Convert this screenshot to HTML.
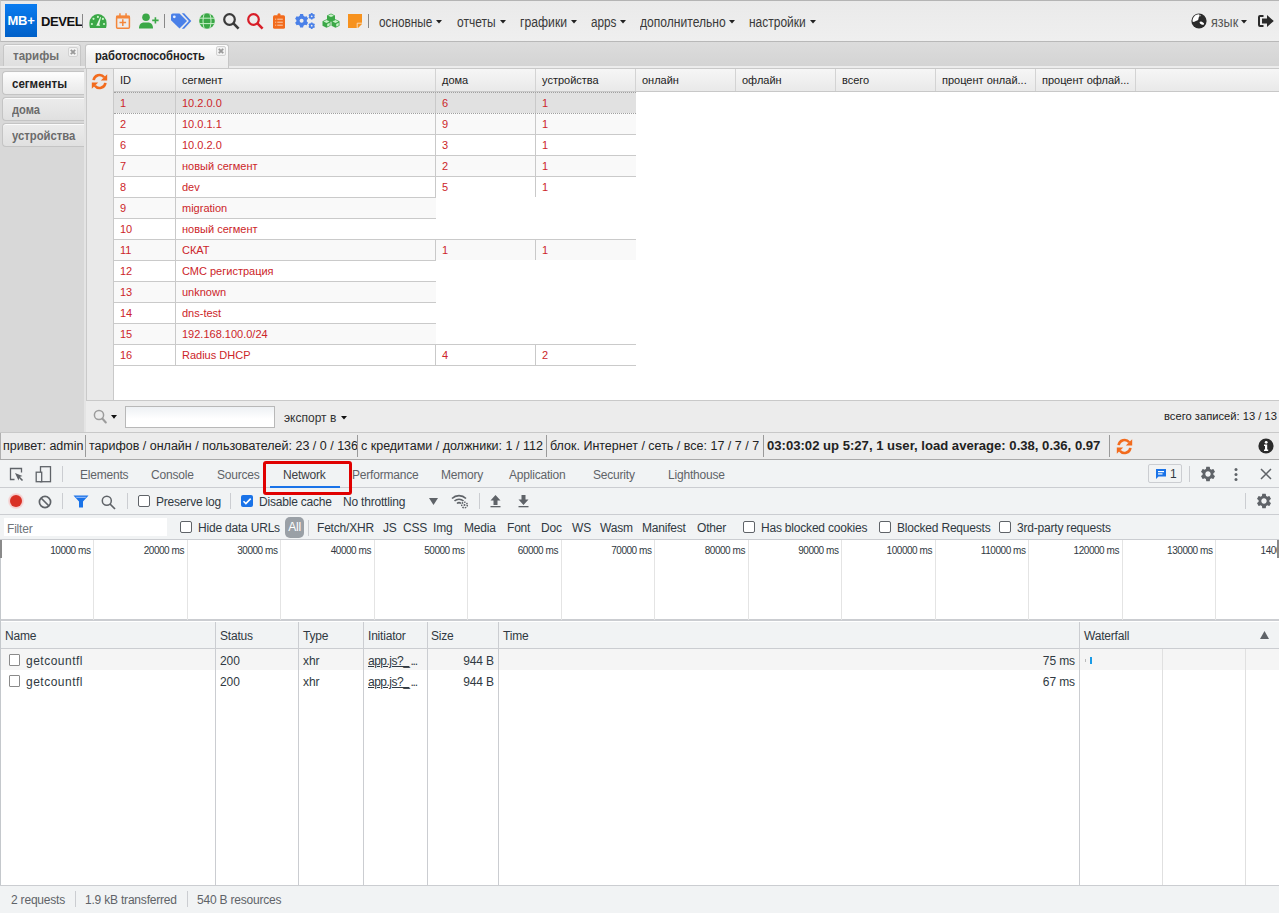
<!DOCTYPE html>
<html><head><meta charset="utf-8">
<style>
*{box-sizing:border-box;margin:0;padding:0}
html,body{width:1279px;height:913px;overflow:hidden;background:#fff;font-family:"Liberation Sans",sans-serif}
.a{position:absolute}
/* top toolbar */
#top{left:0;top:0;width:1279px;height:42px;background:linear-gradient(#eaeaea,#efefef);border-top:1px solid #b4b4b4;border-left:1px solid #c8c8c8;border-bottom:1px solid #b8b8b8}
#logo{left:5px;top:4px;width:32px;height:33px;background:linear-gradient(#0a7cf0,#0060c8);color:#fff;font-weight:bold;font-size:13px;line-height:33px;text-align:center;letter-spacing:-0.3px}
.menu{top:14px;font-size:14px;color:#3a3a3a;white-space:nowrap;line-height:16px}
.mt{display:inline-block;transform-origin:0 0}
.caret{display:inline-block;width:0;height:0;border-left:3px solid transparent;border-right:3px solid transparent;border-top:4px solid #333;vertical-align:middle;margin-left:4px;margin-top:-2px}
.sep{width:1px;height:20px;background:#aaa;top:11px}
/* tab bar */
#tabbar{left:0;top:42px;width:1279px;height:24px;background:linear-gradient(#dcdcdc,#d4d4d4)}
.tab{border:1px solid #c6c6c6;border-bottom:none;border-radius:3px 3px 0 0;font-weight:bold;font-size:12px}
.x{width:10px;height:10px;border:1px solid #d2d2d2;border-radius:2px;background:#f2f2f2}
.x svg{position:absolute;left:-1px;top:-1px}
/* sidebar */
#side{left:0;top:69px;width:84px;height:364px;background:#d8d8d8}
.stab{left:2px;width:82px;height:24px;border:1px solid #c4c4c4;border-right:none;border-radius:4px 0 0 4px;font-weight:bold;font-size:12px;padding-left:9px;line-height:25px;color:#6b6b6b;background:linear-gradient(#ececec,#e6e6e6 50%,#e0e0e0);box-shadow:inset 0 1px 0 #fbfbfb}
#refcol{left:86px;top:69px;width:28px;height:332px;background:#e9e9e9;border-left:1px solid #c9c9c9;border-right:1px solid #c9c9c9}
/* grid */
#gh{left:114px;top:69px;width:1165px;height:23px;background:linear-gradient(#f6f6f6,#e9e9e9);border-bottom:1px solid #c8c8c8}
.hc{top:0;height:22px;border-right:1px solid #d3d3d3;font-size:11px;color:#222;padding-left:6px;line-height:22px;white-space:nowrap}
.r{left:114px;width:523px;height:21px;font-size:11px;color:#cc2529;border-top:1px solid #cacaca}
.c{top:0;height:20px;line-height:20px;padding-left:6px;border-right:1px solid #c9c9c9;white-space:nowrap}
/* bottom grid toolbar */
#gbot{left:86px;top:400px;width:1193px;height:33px;background:#ececec;border-top:1px solid #c9c9c9}
/* status bar */
#status{left:0;top:432px;width:1279px;height:28px;background:#ececec;border-top:1px solid #c8c8c8;border-bottom:1px solid #b0b0b0;font-size:12.5px;color:#222;white-space:nowrap}
.sc{top:1px;height:25px;line-height:25px;padding:0 3px}
/* devtools */
.dt{font-family:"Liberation Sans",sans-serif;font-size:12px;color:#303942;letter-spacing:-0.2px}
#dtabs{left:0;top:460px;width:1279px;height:28px;background:#f1f3f4;border-bottom:1px solid #cbcdd1}
#dtool{left:0;top:488px;width:1279px;height:27px;background:#f1f3f4;border-bottom:1px solid #cbcdd1}
#dfilt{left:0;top:515px;width:1279px;height:25px;background:#f1f3f4;border-bottom:1px solid #cbcdd1}
#overview{left:0;top:540px;width:1279px;height:81px;background:#fff;border-bottom:2px solid #cbcdd1}
#nhead{left:0;top:622px;width:1279px;height:27px;background:#f1f3f4;border-bottom:1px solid #cbcdd1}
#foot{left:0;top:885px;width:1279px;height:28px;background:#f1f3f4;border-top:1px solid #cbcdd1}
.dtab{top:1px;height:28px;line-height:28px;color:#5f6368;font-size:12px}
.vl{width:1px;background:#cbcdd1}
.cb{width:12px;height:12px;border:1px solid #5f6368;border-radius:2px;background:#fff}
</style></head><body>

<!-- TOP TOOLBAR -->
<div id="top" class="a"></div>
<div id="logo" class="a">MB+</div>
<div class="a" style="left:41px;top:14px;font-weight:bold;font-size:13px;color:#111;letter-spacing:-0.4px">DEVEL</div>
<div class="a sep" style="left:82px;top:14px;height:14px;background:#888"></div>
<svg class="a" style="left:89px;top:13px" width="18" height="16" viewBox="0 0 18 16"><path d="M1 15C0.5 13.5 0.4 12 0.4 10A8.6 9 0 0 1 17.6 10C17.6 12 17.5 13.5 17 15z" fill="#3ba847"/><g fill="#c8f5c8"><circle cx="4.5" cy="5.8" r="1.1"/><circle cx="8.9" cy="3.9" r="1.1"/><circle cx="13.9" cy="5.9" r="1.1"/><circle cx="2.9" cy="11" r="1.1"/><circle cx="15" cy="11" r="1.1"/></g><path d="M7.2 12.8L8.2 10.8 11.3 4 12 4.3 10.3 11.2 11.2 12.8z" fill="#e6fae6"/></svg>
<svg class="a" style="left:115px;top:13px" width="16" height="16" viewBox="0 0 16 16"><rect x="1.6" y="3.4" width="12.8" height="11.8" rx="1" fill="none" stroke="#f4863a" stroke-width="1.5"/><rect x="1" y="2.6" width="14" height="3" rx="0.8" fill="#f4863a"/><rect x="4.2" y="0.3" width="1.5" height="3" fill="#f4863a"/><rect x="10.3" y="0.3" width="1.5" height="3" fill="#f4863a"/><path d="M7.8 6.3v6.6M4.5 9.6h6.6" stroke="#f4863a" stroke-width="1.5"/></svg>
<svg class="a" style="left:139px;top:13px" width="21" height="16" viewBox="0 0 21 16"><circle cx="7" cy="4.2" r="3.8" fill="#3ba847"/><path d="M0 15.5C0 11.5 2 9.5 5 9.5h4c3 0 5 2 5 6z" fill="#3ba847"/><path d="M16.4 4.2v6.4M13.2 7.4h6.4" stroke="#3ba847" stroke-width="1.6"/></svg>
<div class="a sep" style="left:164px;top:14px;height:14px;background:#888"></div>
<svg class="a" style="left:170px;top:13px" width="22" height="16" viewBox="0 0 22 16"><path d="M1 2.3Q1 0.5 2.8 0.5H9.5L17 8 9.5 15.5 1 7.3z" fill="#4a80e8"/><circle cx="4.3" cy="3.8" r="1.4" fill="#e6eeff"/><path d="M11.8 0.3h2.4L21.3 8 14.2 15.7h-2.4L18.9 8z" fill="#4a80e8"/></svg>
<svg class="a" style="left:199px;top:13px" width="16" height="16" viewBox="0 0 16 16"><circle cx="8" cy="8" r="7.8" fill="#3ba847"/><path d="M0 5.2h16M0 10.6h16" stroke="#c8f0c8" stroke-width="1"/><path d="M5.2 0.5C3.6 5 3.6 11 5.2 15.5M10.8 0.5C12.4 5 12.4 11 10.8 15.5" fill="none" stroke="#c8f0c8" stroke-width="1"/></svg>
<svg class="a" style="left:222px;top:12px" width="18" height="18" viewBox="0 0 18 18"><circle cx="7.5" cy="7.5" r="5.3" fill="none" stroke="#3a3a3a" stroke-width="2.2"/><path d="M11.2 11.2l5.4 5.4" stroke="#3a3a3a" stroke-width="2.6"/></svg>
<svg class="a" style="left:246px;top:12px" width="18" height="18" viewBox="0 0 18 18"><circle cx="7.5" cy="7.5" r="5.3" fill="none" stroke="#d81e28" stroke-width="2.2"/><path d="M11.2 11.2l5.4 5.4" stroke="#d81e28" stroke-width="2.6"/></svg>
<svg class="a" style="left:273px;top:13px" width="12" height="16" viewBox="0 0 12 16"><rect x="0" y="2.2" width="12" height="13.6" rx="1.5" fill="#f26b1d"/><circle cx="6" cy="1.8" r="1.6" fill="#f26b1d"/><path d="M2.2 6.2h1M4.3 6.2h5.5M2.2 9.2h1M4.3 9.2h5.5M2.2 12.2h1M4.3 12.2h5.5" stroke="#fbd3b5" stroke-width="1"/></svg>
<svg class="a" style="left:294px;top:13px" width="22" height="17" viewBox="0 0 22 17"><path fill="#4a80e8" fill-rule="evenodd" d="M5.72 2.79 L6.10 1.12 L9.10 1.12 L9.48 2.79 L10.95 3.65 L12.60 3.14 L14.09 5.73 L12.83 6.90 L12.83 8.60 L14.09 9.77 L12.60 12.36 L10.95 11.85 L9.48 12.71 L9.10 14.38 L6.10 14.38 L5.72 12.71 L4.25 11.85 L2.60 12.36 L1.11 9.77 L2.37 8.60 L2.37 6.90 L1.11 5.73 L2.60 3.14 L4.25 3.65Z M9.6 7.75A2 2 0 1 0 5.6 7.75A2 2 0 1 0 9.6 7.75Z"/><path fill="#4a80e8" fill-rule="evenodd" d="M16.74 0.77 L16.95 -0.02 L18.45 -0.02 L18.66 0.77 L19.41 1.21 L20.20 0.99 L20.95 2.29 L20.36 2.87 L20.36 3.73 L20.95 4.31 L20.20 5.61 L19.41 5.39 L18.66 5.83 L18.45 6.62 L16.95 6.62 L16.74 5.83 L15.99 5.39 L15.20 5.61 L14.45 4.31 L15.04 3.73 L15.04 2.87 L14.45 2.29 L15.20 0.99 L15.99 1.21Z M18.6 3.3A0.9 0.9 0 1 0 16.8 3.3A0.9 0.9 0 1 0 18.6 3.3Z"/><path fill="#4a80e8" fill-rule="evenodd" d="M16.74 10.17 L16.95 9.38 L18.45 9.38 L18.66 10.17 L19.41 10.61 L20.20 10.39 L20.95 11.69 L20.36 12.27 L20.36 13.13 L20.95 13.71 L20.20 15.01 L19.41 14.79 L18.66 15.23 L18.45 16.02 L16.95 16.02 L16.74 15.23 L15.99 14.79 L15.20 15.01 L14.45 13.71 L15.04 13.13 L15.04 12.27 L14.45 11.69 L15.20 10.39 L15.99 10.61Z M18.6 12.7A0.9 0.9 0 1 0 16.8 12.7A0.9 0.9 0 1 0 18.6 12.7Z"/></svg>
<svg class="a" style="left:322px;top:13px" width="18" height="15" viewBox="0 0 18 15"><g fill="#3ba847"><path d="M5 2.5L9 0.5 13 2.5V7L9 9 5 7z"/><path d="M0.5 8.3L4.5 6.3 8.5 8.3V12.8L4.5 14.8 0.5 12.8z"/><path d="M9.5 8.3L13.5 6.3 17.5 8.3V12.8L13.5 14.8 9.5 12.8z"/></g><g fill="#c9f2c9"><path d="M6 2.7L9 1.3 12 2.7 9 4.1z"/><path d="M1.5 8.5L4.5 7.1 7.5 8.5 4.5 9.9z"/><path d="M10.5 8.5L13.5 7.1 16.5 8.5 13.5 9.9z"/><path d="M5.2 11v2.6l2.5-1.2V9.8z"/><path d="M14.2 11v2.6l2.5-1.2V9.8z"/></g></svg>
<svg class="a" style="left:348px;top:14px" width="14" height="14" viewBox="0 0 14 14"><path d="M0 0h14v9.5L9.5 14H0z" fill="#f7921e"/><path d="M10 14V10h4z" fill="#f7921e"/><path d="M9.2 14V9.2H14" fill="none" stroke="#fde3c4" stroke-width="0.9"/></svg>
<div class="a sep" style="left:368px;top:14px;height:14px;background:#888"></div>
<div class="a menu" style="left:379px"><span class="mt" style="transform:scaleX(0.843)">основные</span></div>
<div class="a menu" style="left:457px"><span class="mt" style="transform:scaleX(0.857)">отчеты</span></div>
<div class="a menu" style="left:520px"><span class="mt" style="transform:scaleX(0.872)">графики</span></div>
<div class="a menu" style="left:591px"><span class="mt" style="transform:scaleX(0.84)">apps</span></div>
<div class="a menu" style="left:640px"><span class="mt" style="transform:scaleX(0.863)">дополнительно</span></div>
<div class="a menu" style="left:749px"><span class="mt" style="transform:scaleX(0.856)">настройки</span></div>
<svg class="a" style="left:436px;top:20px" width="6" height="4" viewBox="0 0 6 4"><path d="M0 0h6L3 3.5z" fill="#222"/></svg>
<svg class="a" style="left:500px;top:20px" width="6" height="4" viewBox="0 0 6 4"><path d="M0 0h6L3 3.5z" fill="#222"/></svg>
<svg class="a" style="left:570.5px;top:20px" width="6" height="4" viewBox="0 0 6 4"><path d="M0 0h6L3 3.5z" fill="#222"/></svg>
<svg class="a" style="left:620px;top:20px" width="6" height="4" viewBox="0 0 6 4"><path d="M0 0h6L3 3.5z" fill="#222"/></svg>
<svg class="a" style="left:729px;top:20px" width="6" height="4" viewBox="0 0 6 4"><path d="M0 0h6L3 3.5z" fill="#222"/></svg>
<svg class="a" style="left:810px;top:20px" width="6" height="4" viewBox="0 0 6 4"><path d="M0 0h6L3 3.5z" fill="#222"/></svg>
<svg class="a" style="left:1241px;top:20px" width="6" height="4" viewBox="0 0 6 4"><path d="M0 0h6L3 3.5z" fill="#222"/></svg>
<svg class="a" style="left:1191px;top:13px" width="16" height="16" viewBox="0 0 16 16"><circle cx="8" cy="8" r="7.6" fill="#2b2b2b"/><path d="M1.5 8.5C1.5 4 4.5 1.2 8 1.2 9 2 8.8 3 8 4 7 5 8 6 7 7 6 8.2 5 7.5 4 8.5 3 9 2.2 9 1.5 8.5z" fill="#fff"/><path d="M8.5 9C9.5 8 11 8.5 12 9.5 13 10 13.5 11 12.5 11.8 11.5 12 10 11.5 9 10.5z" fill="#fff"/><path d="M9.5 2C10.5 2.5 10 3.5 9.3 3.2z" fill="#fff"/></svg>
<div class="a menu" style="left:1211px;color:#555"><span class="mt" style="transform:scaleX(0.9)">язык</span></div>
<svg class="a" style="left:1258px;top:15px" width="16" height="12" viewBox="0 0 16 12"><path d="M5.5 1H2Q1 1 1 2V10Q1 11 2 11H5.5" fill="none" stroke="#2b2b2b" stroke-width="2"/><path d="M4 3.6H9V0L15.8 6 9 12V8.4H4z" fill="#2b2b2b"/></svg>
<!-- TAB BAR -->
<div id="tabbar" class="a"></div>
<div class="a" style="left:0;top:66px;width:1279px;height:2px;background:#ececec"></div>
<div class="a" style="left:0;top:68px;width:1279px;height:1px;background:#c9c9c9"></div>
<div class="a tab" style="left:3px;top:44px;width:78px;height:22px;background:linear-gradient(#eaeaea,#e0e0e0);color:#6e6e6e;padding:4px 0 0 9px;box-shadow:inset 0 1px 0 #f8f8f8"><span class="mt" style="transform:scaleX(0.96)">тарифы</span></div>
<div class="a x" style="left:68px;top:47px"><svg width="10" height="10" viewBox="0 0 10 10"><path d="M2.8 2.8l4.4 4.4M7.2 2.8L2.8 7.2" stroke="#9a9a9a" stroke-width="1.9"/></svg></div>
<div class="a tab" style="left:85px;top:44px;width:144px;height:24px;background:linear-gradient(#fefefe,#f0f0f0 60%,#ededed);color:#222;padding:4px 0 0 9px"><span class="mt" style="transform:scaleX(0.93)">работоспособность</span></div>
<div class="a x" style="left:216px;top:46px"><svg width="10" height="10" viewBox="0 0 10 10"><path d="M2.8 2.8l4.4 4.4M7.2 2.8L2.8 7.2" stroke="#9a9a9a" stroke-width="1.9"/></svg></div>

<!-- SIDEBAR -->
<div id="side" class="a"></div>
<div class="a stab" style="top:71px;color:#222;background:linear-gradient(#fefefe,#f2f2f2 50%,#e9e9e9)"><span class="mt" style="transform:scaleX(0.96)">сегменты</span></div>
<div class="a stab" style="top:97px"><span class="mt" style="transform:scaleX(0.93)">дома</span></div>
<div class="a stab" style="top:123px"><span class="mt" style="transform:scaleX(0.94)">устройства</span></div>
<div class="a" style="left:84px;top:69px;width:2px;height:364px;background:#e4e4e4"></div>
<div id="refcol" class="a"></div>
<svg class="a" style="left:91px;top:73px" width="17" height="17" viewBox="0 0 17 17"><g fill="none" stroke="#f26b1d" stroke-width="2.6"><path d="M2.6 7.2A6 6 0 0 1 13.2 4.2"/><path d="M14.4 9.8A6 6 0 0 1 3.8 12.8"/></g><path d="M16.2 1.2V7.6H9.8z" fill="#f26b1d"/><path d="M0.8 15.8V9.4H7.2z" fill="#f26b1d"/></svg>

<!-- GRID HEADER -->
<div id="gh" class="a">
 <div class="a hc" style="left:0;width:62px">ID</div>
 <div class="a hc" style="left:62px;width:260px">сегмент</div>
 <div class="a hc" style="left:322px;width:100px">дома</div>
 <div class="a hc" style="left:422px;width:100px">устройства</div>
 <div class="a hc" style="left:522px;width:100px">онлайн</div>
 <div class="a hc" style="left:622px;width:100px">офлайн</div>
 <div class="a hc" style="left:722px;width:100px">всего</div>
 <div class="a hc" style="left:822px;width:100px">процент онлай...</div>
 <div class="a hc" style="left:922px;width:100px">процент офлай...</div>
</div>

<div id="rows">
<div class="a r" style="top:92px;width:522px;background:#fff;background:#e1e1e1;border-top:1px dotted #a0a0a0"><div class="a c" style="left:0px;width:62px">1</div><div class="a c" style="left:62px;width:260px">10.2.0.0</div><div class="a c" style="left:322px;width:100px">6</div><div class="a c" style="left:422px;width:100px;border-right:none">1</div></div>
<div class="a r" style="top:113px;width:522px;background:#f9f9f9;border-top:1px dotted #a0a0a0"><div class="a c" style="left:0px;width:62px">2</div><div class="a c" style="left:62px;width:260px">10.0.1.1</div><div class="a c" style="left:322px;width:100px">9</div><div class="a c" style="left:422px;width:100px;border-right:none">1</div></div>
<div class="a r" style="top:134px;width:522px;background:#fff"><div class="a c" style="left:0px;width:62px">6</div><div class="a c" style="left:62px;width:260px">10.0.2.0</div><div class="a c" style="left:322px;width:100px">3</div><div class="a c" style="left:422px;width:100px;border-right:none">1</div></div>
<div class="a r" style="top:155px;width:522px;background:#f9f9f9"><div class="a c" style="left:0px;width:62px">7</div><div class="a c" style="left:62px;width:260px">новый сегмент</div><div class="a c" style="left:322px;width:100px">2</div><div class="a c" style="left:422px;width:100px;border-right:none">1</div></div>
<div class="a r" style="top:176px;width:522px;background:#fff"><div class="a c" style="left:0px;width:62px">8</div><div class="a c" style="left:62px;width:260px">dev</div><div class="a c" style="left:322px;width:100px">5</div><div class="a c" style="left:422px;width:100px;border-right:none">1</div></div>
<div class="a r" style="top:197px;width:322px;background:#f9f9f9"><div class="a c" style="left:0px;width:62px">9</div><div class="a c" style="left:62px;width:260px;border-right:none">migration</div></div>
<div class="a r" style="top:218px;width:322px;background:#fff"><div class="a c" style="left:0px;width:62px">10</div><div class="a c" style="left:62px;width:260px;border-right:none">новый сегмент</div></div>
<div class="a r" style="top:239px;width:522px;background:#f9f9f9"><div class="a c" style="left:0px;width:62px">11</div><div class="a c" style="left:62px;width:260px">СКАТ</div><div class="a c" style="left:322px;width:100px">1</div><div class="a c" style="left:422px;width:100px;border-right:none">1</div></div>
<div class="a r" style="top:260px;width:322px;background:#fff"><div class="a c" style="left:0px;width:62px">12</div><div class="a c" style="left:62px;width:260px;border-right:none">СМС регистрация</div></div>
<div class="a r" style="top:281px;width:322px;background:#f9f9f9"><div class="a c" style="left:0px;width:62px">13</div><div class="a c" style="left:62px;width:260px;border-right:none">unknown</div></div>
<div class="a r" style="top:302px;width:322px;background:#fff"><div class="a c" style="left:0px;width:62px">14</div><div class="a c" style="left:62px;width:260px;border-right:none">dns-test</div></div>
<div class="a r" style="top:323px;width:322px;background:#f9f9f9"><div class="a c" style="left:0px;width:62px">15</div><div class="a c" style="left:62px;width:260px;border-right:none">192.168.100.0/24</div></div>
<div class="a r" style="top:344px;width:522px;background:#fff;height:22px;border-bottom:1px solid #cacaca"><div class="a c" style="left:0px;width:62px">16</div><div class="a c" style="left:62px;width:260px">Radius DHCP</div><div class="a c" style="left:322px;width:100px">4</div><div class="a c" style="left:422px;width:100px;border-right:none">2</div></div>
</div>

<!-- GRID BOTTOM -->
<div id="gbot" class="a"></div>
<svg class="a" style="left:93px;top:409px" width="14" height="15" viewBox="0 0 14 15"><circle cx="6" cy="6" r="4.6" fill="none" stroke="#9c9c9c" stroke-width="1.5"/><path d="M9.3 9.5l3.5 4" stroke="#9c9c9c" stroke-width="2" stroke-linecap="round"/></svg>
<svg class="a" style="left:111px;top:415px" width="6" height="4" viewBox="0 0 6 4"><path d="M0 0h6L3 3.8z" fill="#111"/></svg>
<div class="a" style="left:125px;top:406px;width:150px;height:22px;background:linear-gradient(#eef1f4,#fff 60%);border:1px solid #b8b8b8"></div>
<div class="a" style="left:284px;top:411px;font-size:12px;color:#333">экспорт в</div>
<svg class="a" style="left:341px;top:416px" width="6" height="4" viewBox="0 0 6 4"><path d="M0 0h6L3 3.5z" fill="#111"/></svg>
<div class="a" style="left:1164px;top:410px;font-size:11.2px;color:#222">всего записей: 13 / 13</div>

<!-- STATUS BAR -->
<div id="status" class="a">
 <div class="a sc" style="left:0">привет: admin</div>
 <div class="a sc" style="left:86px">тарифов / онлайн / пользователей: 23 / 0 / 136</div>
 <div class="a sc" style="left:358px">с кредитами / должники: 1 / 112</div>
 <div class="a sc" style="left:547px">блок. Интернет / сеть / все: 17 / 7 / 7</div>
 <div class="a sc" style="left:764px;top:0;font-weight:bold;font-size:13.1px">03:03:02 up 5:27, 1 user, load average: 0.38, 0.36, 0.97</div>
 <div class="a" style="left:85px;top:2px;width:1px;height:22px;background:#9a9a9a"></div>
 <div class="a" style="left:357px;top:2px;width:1px;height:22px;background:#9a9a9a"></div>
 <div class="a" style="left:546px;top:2px;width:1px;height:22px;background:#9a9a9a"></div>
 <div class="a" style="left:763px;top:2px;width:1px;height:22px;background:#9a9a9a"></div>
 <div class="a" style="left:1109px;top:2px;width:1px;height:22px;background:#9a9a9a"></div>
</div>
<svg class="a" style="left:1116px;top:438px" width="17" height="17" viewBox="0 0 17 17"><g fill="none" stroke="#f26b1d" stroke-width="2.6"><path d="M2.6 7.2A6 6 0 0 1 13.2 4.2"/><path d="M14.4 9.8A6 6 0 0 1 3.8 12.8"/></g><path d="M16.2 1.2V7.6H9.8z" fill="#f26b1d"/><path d="M0.8 15.8V9.4H7.2z" fill="#f26b1d"/></svg>
<svg class="a" style="left:1258px;top:438px" width="16" height="16" viewBox="0 0 16 16"><circle cx="8" cy="8" r="7.6" fill="#2b2b2b"/><circle cx="8.2" cy="4.3" r="1.4" fill="#fff"/><path d="M6 6.6h3.2v5h1v1.3H6v-1.3h1v-3.7H6z" fill="#fff"/></svg>

<div class="a" style="left:0;top:433px;width:1px;height:26px;background:#b0b0b0"></div>
<!-- DEVTOOLS -->
<div class="a" style="left:0;top:459px;width:1279px;height:1px;background:#a9a9a9"></div>
<div id="dtabs" class="a dt">
 <svg class="a" style="left:9px;top:7px" width="15" height="15" viewBox="0 0 15 15"><path d="M5.5 12.5H1.5V1.5H12.5V5.5" fill="none" stroke="#5f6368" stroke-width="1.3"/><path d="M6 6l7.5 3-3 1-1 3.5z" fill="#5f6368"/><path d="M10 10l3.5 3.5" stroke="#5f6368" stroke-width="1.6"/></svg>
 <svg class="a" style="left:35px;top:6px" width="17" height="17" viewBox="0 0 17 17"><rect x="5.5" y="0.7" width="10" height="15" fill="none" stroke="#5f6368" stroke-width="1.3"/><rect x="1.2" y="6.2" width="5.5" height="9.5" fill="#f1f3f4" stroke="#5f6368" stroke-width="1.3"/></svg>
 <div class="a vl" style="left:62px;top:6px;height:16px"></div>
 <div class="a dtab" style="left:80px">Elements</div>
 <div class="a dtab" style="left:151px">Console</div>
 <div class="a dtab" style="left:217px">Sources</div>
 <div class="a dtab" style="left:283px;color:#3c4043">Network</div>
 <div class="a" style="left:270px;top:26px;width:70px;height:2px;background:#1a73e8"></div>
 <div class="a dtab" style="left:352px">Performance</div>
 <div class="a dtab" style="left:441px">Memory</div>
 <div class="a dtab" style="left:509px">Application</div>
 <div class="a dtab" style="left:593px">Security</div>
 <div class="a dtab" style="left:668px">Lighthouse</div>
 <div class="a" style="left:1148px;top:4px;width:34px;height:19px;border:1px solid #cbcdd1;border-radius:2px;background:#f1f3f4"></div>
 <svg class="a" style="left:1155px;top:8px" width="12" height="12" viewBox="0 0 12 12"><path d="M1 1h10v7.5H3.5L1 11z" fill="#1a73e8"/><rect x="3" y="3" width="6" height="1.2" fill="#fff"/><rect x="3" y="5.3" width="4.5" height="1.2" fill="#fff"/></svg>
 <div class="a" style="left:1170px;top:0;line-height:28px;font-size:12px;color:#303942">1</div>
 <div class="a vl" style="left:1189px;top:6px;height:16px"></div>
 <svg class="a" style="left:1199px;top:5px" width="18" height="18" viewBox="0 0 24 24"><path fill="#5f6368" d="M19.14 12.94c.04-.3.06-.61.06-.94 0-.32-.02-.64-.07-.94l2.03-1.58a.49.49 0 0 0 .12-.61l-1.92-3.32a.488.488 0 0 0-.59-.22l-2.39.96c-.5-.38-1.03-.7-1.62-.94l-.36-2.54a.484.484 0 0 0-.48-.41h-3.84c-.24 0-.43.17-.47.41l-.36 2.54c-.59.24-1.13.57-1.62.94l-2.39-.96c-.22-.08-.47 0-.59.22L2.74 8.87c-.12.21-.08.47.12.61l2.03 1.58c-.05.3-.09.63-.09.94s.02.64.07.94l-2.03 1.58a.49.49 0 0 0-.12.61l1.92 3.32c.12.22.37.29.59.22l2.39-.96c.5.38 1.03.7 1.62.94l.36 2.54c.05.24.24.41.48.41h3.84c.24 0 .44-.17.47-.41l.36-2.54c.59-.24 1.13-.56 1.62-.94l2.39.96c.22.08.47 0 .59-.22l1.92-3.32c.12-.22.07-.47-.12-.61l-2.01-1.58zM12 15.6c-1.98 0-3.6-1.62-3.6-3.6s1.62-3.6 3.6-3.6 3.6 1.62 3.6 3.6-1.62 3.6-3.6 3.6z"/></svg>
 <svg class="a" style="left:1233px;top:7px" width="6" height="15" viewBox="0 0 6 15"><circle cx="3" cy="2.5" r="1.5" fill="#5f6368"/><circle cx="3" cy="7.5" r="1.5" fill="#5f6368"/><circle cx="3" cy="12.5" r="1.5" fill="#5f6368"/></svg>
 <svg class="a" style="left:1260px;top:8px" width="12" height="12" viewBox="0 0 12 12"><path d="M1 1l10 10M11 1L1 11" stroke="#5f6368" stroke-width="1.5"/></svg>
</div>
<div id="dtool" class="a dt">
 <div class="a" style="left:8px;top:5px;width:16px;height:16px;border-radius:50%;background:radial-gradient(circle,#f5b5b5 40%,rgba(247,200,200,0.5) 70%,rgba(241,243,244,0) 100%)"></div>
 <div class="a" style="left:10px;top:7px;width:12px;height:12px;border-radius:50%;background:#d93025"></div>
 <svg class="a" style="left:38px;top:7px" width="14" height="14" viewBox="0 0 14 14"><circle cx="7" cy="7" r="5.6" fill="none" stroke="#5f6368" stroke-width="1.7"/><path d="M3 3l8 8" stroke="#5f6368" stroke-width="1.7"/></svg>
 <div class="a vl" style="left:62px;top:5px;height:16px"></div>
 <svg class="a" style="left:73px;top:7px" width="16" height="13" viewBox="0 0 16 13"><path d="M0.5 0.5h15l-5.5 6v6h-4v-6z" fill="#1a73e8"/><path d="M2.5 1.8h11l-1.2 1.3H3.7z" fill="#8ab4f8"/></svg>
 <svg class="a" style="left:101px;top:7px" width="15" height="15" viewBox="0 0 15 15"><circle cx="5.8" cy="5.8" r="4.5" fill="none" stroke="#5f6368" stroke-width="1.5"/><path d="M9 9l5 5" stroke="#5f6368" stroke-width="1.7"/></svg>
 <div class="a vl" style="left:127px;top:5px;height:16px"></div>
 <div class="a cb" style="left:138px;top:7px"></div>
 <div class="a" style="left:156px;top:1px;line-height:27px">Preserve log</div>
 <div class="a vl" style="left:230px;top:5px;height:16px"></div>
 <div class="a" style="left:241px;top:7px;width:12px;height:12px;border-radius:2px;background:#1a73e8"></div>
 <svg class="a" style="left:241px;top:7px" width="12" height="12" viewBox="0 0 12 12"><path d="M2.5 6.2l2.4 2.4 4.8-5" fill="none" stroke="#fff" stroke-width="1.6"/></svg>
 <div class="a" style="left:259px;top:1px;line-height:27px">Disable cache</div>
 <div class="a" style="left:343px;top:1px;line-height:27px">No throttling</div>
 <svg class="a" style="left:429px;top:10px" width="9" height="7" viewBox="0 0 9 7"><path d="M0 0h9L4.5 7z" fill="#5f6368"/></svg>
 <svg class="a" style="left:451px;top:5px" width="18" height="16" viewBox="0 0 18 16"><path d="M1 5.5a10 10 0 0 1 14 0" fill="none" stroke="#5f6368" stroke-width="1.6"/><path d="M3.5 8a6.5 6.5 0 0 1 9 0" fill="none" stroke="#5f6368" stroke-width="1.6"/><path d="M6 10.5a3 3 0 0 1 4 0" fill="none" stroke="#5f6368" stroke-width="1.6"/><circle cx="13.5" cy="12" r="2.8" fill="none" stroke="#5f6368" stroke-width="1.5" stroke-dasharray="1.5 1"/><circle cx="13.5" cy="12" r="1" fill="#5f6368"/></svg>
 <div class="a vl" style="left:479px;top:5px;height:16px"></div>
 <svg class="a" style="left:489px;top:6px" width="13" height="14" viewBox="0 0 13 14"><path d="M6.5 1L1.5 6.5h3V11h4V6.5h3z" fill="#5f6368"/><rect x="1.5" y="12" width="10" height="1.3" fill="#5f6368"/></svg>
 <svg class="a" style="left:517px;top:6px" width="13" height="14" viewBox="0 0 13 14"><path d="M6.5 11L1.5 5.5h3V1h4v4.5h3z" fill="#5f6368"/><rect x="1.5" y="12" width="10" height="1.3" fill="#5f6368"/></svg>
 <div class="a vl" style="left:1245px;top:5px;height:16px"></div>
 <svg class="a" style="left:1255px;top:4px" width="18" height="18" viewBox="0 0 24 24"><path fill="#5f6368" d="M19.14 12.94c.04-.3.06-.61.06-.94 0-.32-.02-.64-.07-.94l2.03-1.58a.49.49 0 0 0 .12-.61l-1.920-3.32a.488.488 0 0 0-.59-.22l-2.39.96c-.5-.38-1.03-.7-1.62-.94l-.36-2.54a.484.484 0 0 0-.48-.41h-3.84c-.24 0-.43.17-.47.41l-.36 2.54c-.59.24-1.13.57-1.62.94l-2.39-.96c-.22-.08-.47 0-.59.22L2.74 8.87c-.12.21-.08.47.12.61l2.03 1.58c-.05.3-.09.63-.09.94s.02.64.07.94l-2.03 1.58a.49.49 0 0 0-.12.61l1.92 3.32c.12.22.37.29.59.22l2.39-.96c.5.38 1.03.7 1.62.94l.36 2.54c.05.24.24.41.48.41h3.840c.24 0 .44-.17.47-.41l.36-2.54c.59-.24 1.13-.56 1.62-.94l2.39.96c.22.08.47 0 .59-.22l1.92-3.32c.12-.22.07-.47-.12-.61l-2.01-1.58zM12 15.6c-1.98 0-3.6-1.62-3.6-3.6s1.62-3.6 3.6-3.6 3.6 1.62 3.6 3.6-1.62 3.6-3.6 3.6z"/></svg>
</div>
<div id="dfilt" class="a dt">
 <div class="a" style="left:4px;top:3px;width:163px;height:18px;background:#fff"></div>
 <div class="a" style="left:7px;top:2px;line-height:25px;color:#6f7479">Filter</div>
 <div class="a cb" style="left:180px;top:6px"></div>
 <div class="a" style="left:198px;top:1px;line-height:25px">Hide data URLs</div>
 <div class="a" style="left:285px;top:2px;width:19px;height:21px;border-radius:5px;background:#9aa0a6;color:#fff;text-align:center;line-height:21px">All</div>
 <div class="a vl" style="left:308px;top:5px;height:16px"></div>
 <div class="a" style="left:317px;top:1px;line-height:25px">Fetch/XHR</div>
 <div class="a" style="left:383px;top:1px;line-height:25px">JS</div>
 <div class="a" style="left:403px;top:1px;line-height:25px">CSS</div>
 <div class="a" style="left:433px;top:1px;line-height:25px">Img</div>
 <div class="a" style="left:464px;top:1px;line-height:25px">Media</div>
 <div class="a" style="left:507px;top:1px;line-height:25px">Font</div>
 <div class="a" style="left:541px;top:1px;line-height:25px">Doc</div>
 <div class="a" style="left:572px;top:1px;line-height:25px">WS</div>
 <div class="a" style="left:600px;top:1px;line-height:25px">Wasm</div>
 <div class="a" style="left:642px;top:1px;line-height:25px">Manifest</div>
 <div class="a" style="left:697px;top:1px;line-height:25px">Other</div>
 <div class="a cb" style="left:743px;top:6px"></div>
 <div class="a" style="left:761px;top:1px;line-height:25px">Has blocked cookies</div>
 <div class="a cb" style="left:879px;top:6px"></div>
 <div class="a" style="left:897px;top:1px;line-height:25px">Blocked Requests</div>
 <div class="a cb" style="left:999px;top:6px"></div>
 <div class="a" style="left:1017px;top:1px;line-height:25px">3rd-party requests</div>
</div>
<div id="overview" class="a dt"><div class="a" style="left:93px;top:0;width:1px;height:80px;background:#e4e4e4"></div>
<div class="a" style="left:-106.5px;top:5px;width:197px;text-align:right;font-size:10px;letter-spacing:-0.45px;color:#303942">10000 ms</div>
<div class="a" style="left:187px;top:0;width:1px;height:80px;background:#e4e4e4"></div>
<div class="a" style="left:-13.0px;top:5px;width:197px;text-align:right;font-size:10px;letter-spacing:-0.45px;color:#303942">20000 ms</div>
<div class="a" style="left:280px;top:0;width:1px;height:80px;background:#e4e4e4"></div>
<div class="a" style="left:80.5px;top:5px;width:197px;text-align:right;font-size:10px;letter-spacing:-0.45px;color:#303942">30000 ms</div>
<div class="a" style="left:374px;top:0;width:1px;height:80px;background:#e4e4e4"></div>
<div class="a" style="left:174.0px;top:5px;width:197px;text-align:right;font-size:10px;letter-spacing:-0.45px;color:#303942">40000 ms</div>
<div class="a" style="left:467px;top:0;width:1px;height:80px;background:#e4e4e4"></div>
<div class="a" style="left:267.5px;top:5px;width:197px;text-align:right;font-size:10px;letter-spacing:-0.45px;color:#303942">50000 ms</div>
<div class="a" style="left:561px;top:0;width:1px;height:80px;background:#e4e4e4"></div>
<div class="a" style="left:361.0px;top:5px;width:197px;text-align:right;font-size:10px;letter-spacing:-0.45px;color:#303942">60000 ms</div>
<div class="a" style="left:654px;top:0;width:1px;height:80px;background:#e4e4e4"></div>
<div class="a" style="left:454.5px;top:5px;width:197px;text-align:right;font-size:10px;letter-spacing:-0.45px;color:#303942">70000 ms</div>
<div class="a" style="left:748px;top:0;width:1px;height:80px;background:#e4e4e4"></div>
<div class="a" style="left:548.0px;top:5px;width:197px;text-align:right;font-size:10px;letter-spacing:-0.45px;color:#303942">80000 ms</div>
<div class="a" style="left:841px;top:0;width:1px;height:80px;background:#e4e4e4"></div>
<div class="a" style="left:641.5px;top:5px;width:197px;text-align:right;font-size:10px;letter-spacing:-0.45px;color:#303942">90000 ms</div>
<div class="a" style="left:935px;top:0;width:1px;height:80px;background:#e4e4e4"></div>
<div class="a" style="left:735.0px;top:5px;width:197px;text-align:right;font-size:10px;letter-spacing:-0.45px;color:#303942">100000 ms</div>
<div class="a" style="left:1028px;top:0;width:1px;height:80px;background:#e4e4e4"></div>
<div class="a" style="left:828.5px;top:5px;width:197px;text-align:right;font-size:10px;letter-spacing:-0.45px;color:#303942">110000 ms</div>
<div class="a" style="left:1122px;top:0;width:1px;height:80px;background:#e4e4e4"></div>
<div class="a" style="left:922.0px;top:5px;width:197px;text-align:right;font-size:10px;letter-spacing:-0.45px;color:#303942">120000 ms</div>
<div class="a" style="left:1215px;top:0;width:1px;height:80px;background:#e4e4e4"></div>
<div class="a" style="left:1015.5px;top:5px;width:197px;text-align:right;font-size:10px;letter-spacing:-0.45px;color:#303942">130000 ms</div>
<div class="a" style="left:1109.0px;top:5px;width:197px;text-align:right;font-size:10px;letter-spacing:-0.45px;color:#303942">140000 ms</div></div>
<div id="nhead" class="a dt">
 <div class="a" style="left:5px;top:1px;line-height:27px">Name</div>
 <div class="a vl" style="left:215px;top:0;height:26px"></div>
 <div class="a" style="left:220px;top:1px;line-height:27px">Status</div>
 <div class="a vl" style="left:298px;top:0;height:26px"></div>
 <div class="a" style="left:303px;top:1px;line-height:27px">Type</div>
 <div class="a vl" style="left:363px;top:0;height:26px"></div>
 <div class="a" style="left:368px;top:1px;line-height:27px">Initiator</div>
 <div class="a vl" style="left:427px;top:0;height:26px"></div>
 <div class="a" style="left:431px;top:1px;line-height:27px">Size</div>
 <div class="a vl" style="left:498px;top:0;height:26px"></div>
 <div class="a" style="left:503px;top:1px;line-height:27px">Time</div>
 <div class="a vl" style="left:1079px;top:0;height:26px"></div>
 <div class="a" style="left:1084px;top:1px;line-height:27px">Waterfall</div>
 <svg class="a" style="left:1260px;top:9px" width="9" height="8" viewBox="0 0 9 8"><path d="M4.5 0L9 8H0z" fill="#5f6368"/></svg>
</div>
<div class="a" style="left:0;top:649px;width:1279px;height:21px;background:#f5f5f5"></div>
<div id="ncols" class="a" style="left:0;top:649px;width:1279px;height:236px">
 <div class="a vl" style="left:215px;top:0;height:236px"></div>
 <div class="a vl" style="left:298px;top:0;height:236px"></div>
 <div class="a vl" style="left:363px;top:0;height:236px"></div>
 <div class="a vl" style="left:427px;top:0;height:236px"></div>
 <div class="a vl" style="left:498px;top:0;height:236px"></div>
 <div class="a vl" style="left:1079px;top:0;height:236px"></div>
 <div class="a vl" style="left:1162px;top:0;height:236px;background:#e0e0e0"></div>
 <div class="a vl" style="left:1245px;top:0;height:236px;background:#e0e0e0"></div>
</div>
<div id="nrows" class="a dt" style="left:0;top:649px;width:1279px;height:42px;letter-spacing:-0.1px">
 <div class="a cb" style="left:9px;top:5px;width:11px;height:12px;border-color:#8a8a8a;border-radius:1px"></div>
 <div class="a" style="left:26px;top:2px;line-height:21px;letter-spacing:0.5px">getcountfl</div>
 <div class="a" style="left:220px;top:2px;line-height:21px">200</div>
 <div class="a" style="left:303px;top:2px;line-height:21px">xhr</div>
 <div class="a" style="left:368px;top:2px;line-height:21px;letter-spacing:-0.5px"><span style="text-decoration:underline">app.js?_</span><span style="letter-spacing:-1.2px;margin-left:1px">...</span></div>
 <div class="a" style="left:428px;top:2px;width:66px;text-align:right;line-height:21px">944 B</div>
 <div class="a" style="left:499px;top:2px;width:576px;text-align:right;line-height:21px">75 ms</div>
 <div class="a" style="left:1090px;top:8px;width:2px;height:7px;background:#1a9be6"></div>
 <div class="a" style="left:1085px;top:10px;width:1px;height:3px;background:#bbb"></div>
 <div class="a cb" style="left:9px;top:26px;width:11px;height:12px;border-color:#8a8a8a;border-radius:1px"></div>
 <div class="a" style="left:26px;top:23px;line-height:21px;letter-spacing:0.5px">getcountfl</div>
 <div class="a" style="left:220px;top:23px;line-height:21px">200</div>
 <div class="a" style="left:303px;top:23px;line-height:21px">xhr</div>
 <div class="a" style="left:368px;top:23px;line-height:21px;letter-spacing:-0.5px"><span style="text-decoration:underline">app.js?_</span><span style="letter-spacing:-1.2px;margin-left:1px">...</span></div>
 <div class="a" style="left:428px;top:23px;width:66px;text-align:right;line-height:21px">944 B</div>
 <div class="a" style="left:499px;top:23px;width:576px;text-align:right;line-height:21px">67 ms</div>
</div>
<div id="foot" class="a dt">
 <div class="a" style="left:11px;top:1px;line-height:27px;color:#5f6368">2 requests</div>
 <div class="a vl" style="left:75px;top:5px;height:16px"></div>
 <div class="a" style="left:85px;top:1px;line-height:27px;color:#5f6368">1.9 kB transferred</div>
 <div class="a vl" style="left:187px;top:5px;height:16px"></div>
 <div class="a" style="left:197px;top:1px;line-height:27px;color:#5f6368">540 B resources</div>
</div>
<div class="a" style="left:263px;top:461px;width:89px;height:34px;border:3px solid #e00000;border-radius:3px"></div>
<div class="a" style="left:0;top:540px;width:1px;height:345px;background:#c4c8cc"></div>
<div class="a" style="left:0;top:540px;width:2px;height:18px;background:#8a8a8a"></div>
<div class="a" style="left:1277px;top:540px;width:2px;height:18px;background:#8a8a8a"></div>
</body></html>
